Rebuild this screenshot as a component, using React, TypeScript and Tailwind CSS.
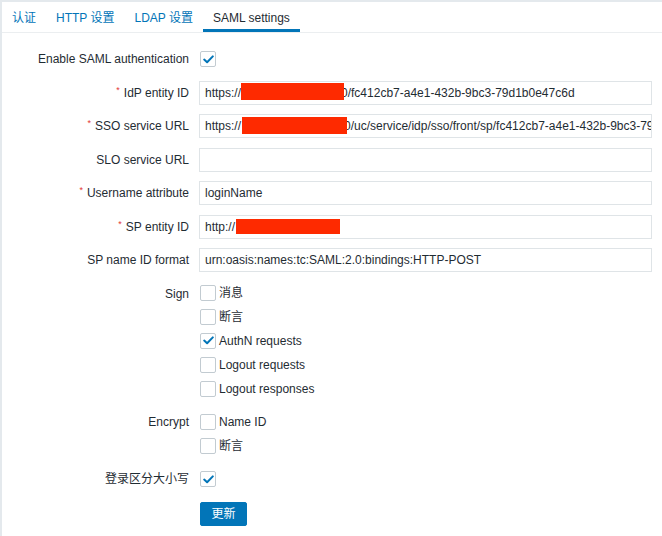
import React from "react";

const FONT = { fontFamily: '"Liberation Sans", Arial, "Noto Sans CJK SC", sans-serif' };

const TABS = [
  { label: "认证", active: false },
  { label: "HTTP 设置", active: false },
  { label: "LDAP 设置", active: false },
  { label: "SAML settings", active: true },
];

function Check({ checked }: { checked?: boolean }) {
  return (
    <span className="flex h-[16px] w-[16px] shrink-0 items-center justify-center rounded-[2px] border border-[#c2cbd1] bg-white">
      {checked && (
        <svg width="11" height="9" viewBox="0 0 11 9" fill="none">
          <path d="M1.2 4.6 L4.1 7.3 L9.8 1.4" stroke="#0275b8" strokeWidth="2" strokeLinecap="round" strokeLinejoin="round" />
        </svg>
      )}
    </span>
  );
}

function Label({ text, req }: { text: string; req?: boolean }) {
  return (
    <div className="flex h-[24px] items-center justify-end text-[12px] text-[#1f2c33]">
      {req && <span className="mr-[4px] -translate-y-[2px] text-[9px] text-[#e33734]">*</span>}
      {text}
    </div>
  );
}

function Field({ children }: { children?: React.ReactNode }) {
  return (
    <div className="flex h-[24px] items-center overflow-hidden whitespace-nowrap border border-[#dfe4e7] bg-white px-[5px] text-[12px] text-[#1f2c33]">
      {children}
    </div>
  );
}

function Redact({ w, h, cls }: { w: number; h: number; cls?: string }) {
  return <span className={"relative inline-block shrink-0 bg-[#fe2a00] " + (cls ?? "")} style={{ width: w, height: h }} />;
}

function CheckList({ items }: { items: { t: string; c?: boolean }[] }) {
  return (
    <div className="flex flex-col">
      {items.map((it) => (
        <div key={it.t} className="flex h-[23.8px] items-center gap-[3px] pl-[1px] text-[12px] text-[#1f2c33]">
          <Check checked={it.c} />
          <span>{it.t}</span>
        </div>
      ))}
    </div>
  );
}

export default function App() {
  return (
    <div style={FONT} className="h-[536px] w-[662px] overflow-hidden border-l-2 border-t-2 border-[#e4e9ed] bg-white">
      <div className="flex h-[31px] border-b border-[#ebeef0]">
        {TABS.map((t) => (
          <div
            key={t.label}
            className={
              "flex items-center px-[10px] pt-[1px] text-[12px] " +
              (t.active ? "border-b-[3px] border-[#0275b8] pt-[4px] text-[#1f2c33]" : "text-[#0275b8]")
            }
          >
            {t.label}
          </div>
        ))}
      </div>

      <div className="grid grid-cols-[187px_1fr] gap-x-[10px] gap-y-[9.5px] pr-[10px] pt-[14px]">
        <Label text="Enable SAML authentication" />
        <div className="flex h-[24px] items-center pl-[1px]">
          <Check checked />
        </div>

        <Label text="IdP entity ID" req />
        <Field>
          <span className="shrink-0">https://</span>
          <Redact w={103} h={17} cls="-mr-[3px] -translate-y-[1px]" />
          <span className="shrink-0">0/fc412cb7-a4e1-432b-9bc3-79d1b0e47c6d</span>
        </Field>

        <Label text="SSO service URL" req />
        <Field>
          <span className="shrink-0">https://</span>
          <Redact w={105} h={17} cls="ml-[1px] -mr-[3px] -translate-y-[1px]" />
          <span className="shrink-0">0/uc/service/idp/sso/front/sp/fc412cb7-a4e1-432b-9bc3-79d1b0e47c6d</span>
        </Field>

        <Label text="SLO service URL" />
        <Field />

        <Label text="Username attribute" req />
        <Field>loginName</Field>

        <Label text="SP entity ID" req />
        <Field>
          <span className="shrink-0">http://</span>
          <Redact w={104} h={15} cls="ml-[1px]" />
        </Field>

        <Label text="SP name ID format" />
        <Field>urn:oasis:names:tc:SAML:2.0:bindings:HTTP-POST</Field>

        <div className="self-start">
          <Label text="Sign" />
        </div>
        <CheckList
          items={[
            { t: "消息" },
            { t: "断言" },
            { t: "AuthN requests", c: true },
            { t: "Logout requests" },
            { t: "Logout responses" },
          ]}
        />

        <div className="self-start">
          <Label text="Encrypt" />
        </div>
        <CheckList items={[{ t: "Name ID" }, { t: "断言" }]} />

        <Label text="登录区分大小写" />
        <div className="flex h-[24px] items-center pl-[1px]">
          <Check checked />
        </div>

        <div />
        <div className="pl-[1px]">
          <button className="h-[24px] w-[47px] rounded-[2px] border border-[#0275b8] bg-[#0275b8] text-[12px] text-white">
            更新
          </button>
        </div>
      </div>
    </div>
  );
}
